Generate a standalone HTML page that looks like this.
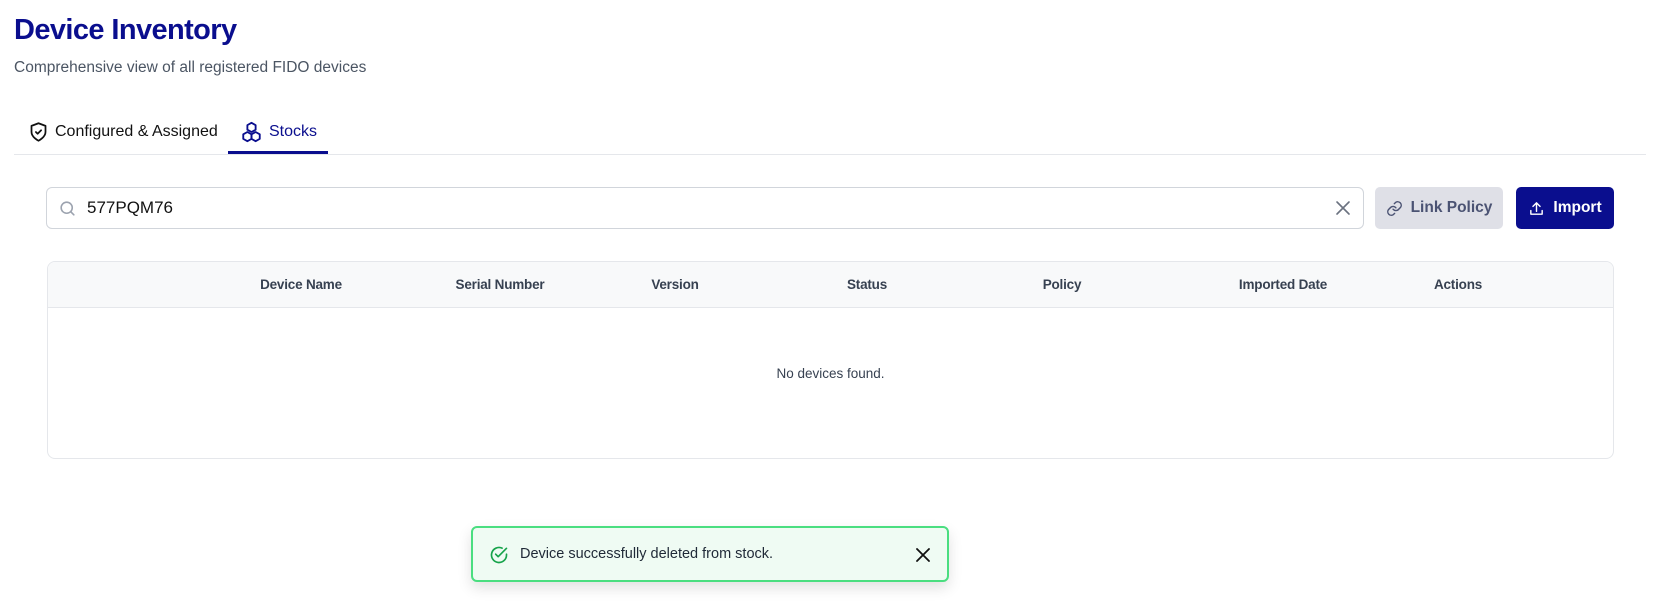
<!DOCTYPE html>
<html><head><meta charset="utf-8"><style>
*{box-sizing:border-box;margin:0;padding:0}
body{width:1660px;height:601px;background:#fff;font-family:"Liberation Sans",Arial,sans-serif;position:relative;overflow:hidden;color:#1f2937}
.abs{position:absolute}
h1{position:absolute;left:14px;top:14px;font-size:29px;font-weight:700;color:#0a0e8e;letter-spacing:-0.6px}
.sub{left:14px;top:59px;font-size:15.5px;color:#4b5563}
.tabs{left:14px;top:154px;width:1632px;height:1px;background:#e5e7eb}
.tab{top:121px;font-size:16px;display:flex;align-items:center;gap:6px}
.ul{left:228px;top:151px;width:100px;height:3px;background:#0a0e8e}
.search{left:46px;top:187px;width:1318px;height:42px;border:1px solid #d1d5db;border-radius:6px}
.btn{top:187px;height:42px;border-radius:5px;display:flex;align-items:center;justify-content:center;gap:8px;font-size:15.5px;font-weight:700}
.table{left:47px;top:261px;width:1567px;height:198px;border:1px solid #e5e7eb;border-radius:8px;overflow:hidden}
.thead{height:46px;background:#f8f9fa;border-bottom:1px solid #e5e7eb;position:relative}
.th{position:absolute;top:15px;font-size:13.5px;font-weight:700;color:#374151;transform:translateX(-50%);white-space:nowrap;letter-spacing:-0.2px}
.toast{left:471px;top:526px;width:478px;height:56px;background:#effbf3;border:2px solid #4ade80;border-radius:6px;box-shadow:0 6px 14px rgba(0,0,0,.12)}
</style></head><body>
<h1>Device Inventory</h1>
<div class="abs sub">Comprehensive view of all registered FIDO devices</div>
<div class="abs tab" style="left:28px;color:#111">
<svg width="21" height="22" viewBox="0 0 24 24" fill="none" stroke="#111" stroke-width="2" stroke-linecap="round" stroke-linejoin="round"><path d="M12 22s8-4 8-10V5l-8-3-8 3v7c0 6 8 10 8 10z"/><path d="M9 12l2 2 4-4"/></svg>
<span>Configured &amp; Assigned</span></div>
<div class="abs tab" style="left:240px;color:#0a0e8e">
<svg width="23" height="22" viewBox="0 0 24 24" fill="none" stroke="#0a0e8e" stroke-width="2" stroke-linejoin="round"><path d="M12 2l4.5 2.5v5L12 12 7.5 9.5v-5z"/><path d="M7.5 12l4.5 2.5v5L7.5 22 3 19.5v-5z"/><path d="M16.5 12l4.5 2.5v5L16.5 22 12 19.5v-5z"/></svg>
<span>Stocks</span></div>
<div class="abs tabs"></div>
<div class="abs ul"></div>
<div class="abs search">
<svg class="abs" style="left:11px;top:11px" width="19" height="19" viewBox="0 0 24 24" fill="none" stroke="#9ca3af" stroke-width="2" stroke-linecap="round"><circle cx="11" cy="11" r="7"/><path d="M20 20l-4-4"/></svg>
<div class="abs" style="left:40px;top:10px;font-size:17px;color:#111">577PQM76</div>
<svg class="abs" style="left:1288px;top:12px" width="16" height="16" viewBox="0 0 16 16" stroke="#6b7280" stroke-width="1.6" stroke-linecap="round"><path d="M2 2l12 12M14 2L2 14"/></svg>
</div>
<div class="abs btn" style="left:1375px;width:128px;background:#dfe0e7;color:#4b5373">
<svg width="17" height="17" viewBox="0 0 24 24" fill="none" stroke="#4b5373" stroke-width="2" stroke-linecap="round"><path d="M10 13a5 5 0 0 0 7.5.5l3-3a5 5 0 0 0-7-7l-1.7 1.7"/><path d="M14 11a5 5 0 0 0-7.5-.5l-3 3a5 5 0 0 0 7 7l1.7-1.7"/></svg>Link Policy</div>
<div class="abs btn" style="left:1516px;width:98px;background:#0a0e8e;color:#fff">
<svg width="17" height="17" viewBox="0 0 24 24" fill="none" stroke="#fff" stroke-width="2" stroke-linecap="round" stroke-linejoin="round"><path d="M4 15v5h16v-5"/><path d="M12 16V4M7 9l5-5 5 5"/></svg>Import</div>
<div class="abs table"><div class="thead">
<span class="th" style="left:253px">Device Name</span>
<span class="th" style="left:452px">Serial Number</span>
<span class="th" style="left:627px">Version</span>
<span class="th" style="left:819px">Status</span>
<span class="th" style="left:1014px">Policy</span>
<span class="th" style="left:1235px">Imported Date</span>
<span class="th" style="left:1410px">Actions</span>
</div>
<div class="abs" style="left:0;width:1565px;top:104px;text-align:center;font-size:13.5px;color:#374151">No devices found.</div>
</div>
<div class="abs toast">
<svg class="abs" style="left:16px;top:17px" width="20" height="20" viewBox="0 0 24 24" fill="none" stroke="#16a34a" stroke-width="2" stroke-linecap="round" stroke-linejoin="round"><path d="M21 11v1a9 9 0 1 1-5.3-8.2"/><path d="M8 11l3 3 10-10"/></svg>
<div class="abs" style="left:47px;top:18px;font-size:14.5px;color:#1f2937">Device successfully deleted from stock.</div>
<svg class="abs" style="left:443px;top:20px" width="14" height="14" viewBox="0 0 14 14" stroke="#111" stroke-width="1.8" stroke-linecap="round"><path d="M1 1l12 12M13 1L1 13"/></svg>
</div>
</body></html>
